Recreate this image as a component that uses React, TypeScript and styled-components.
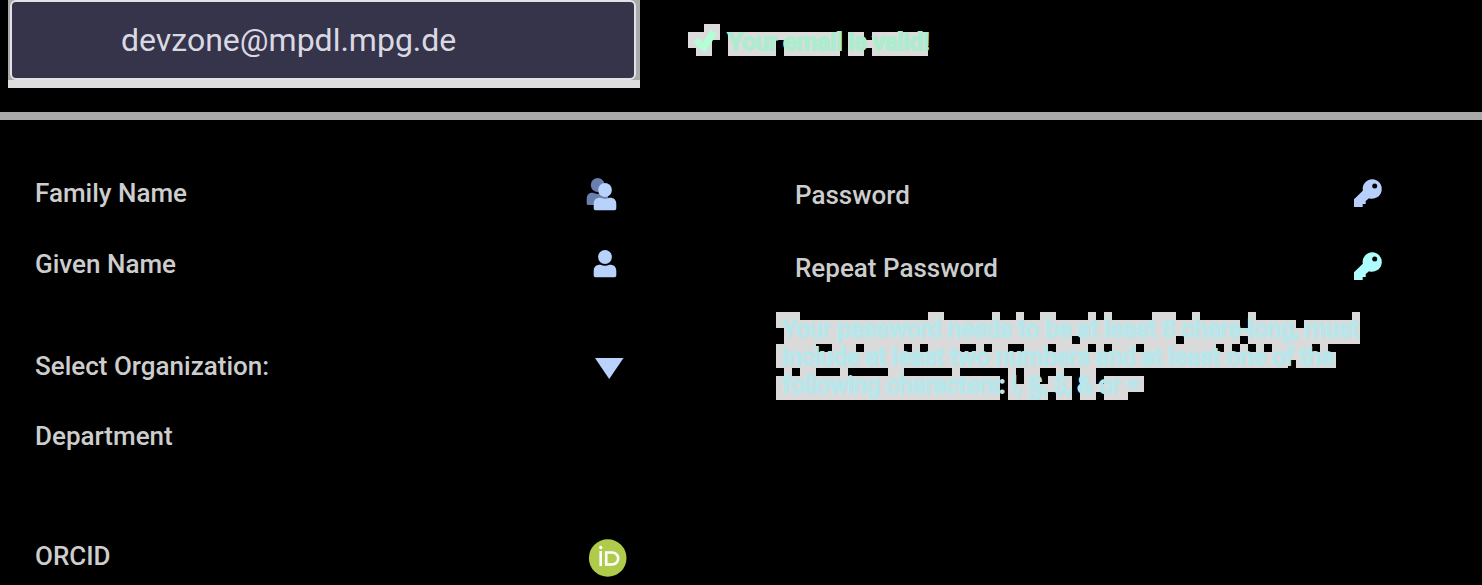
import React from "react";
import styled, { createGlobalStyle } from "styled-components";

const GlobalStyle = createGlobalStyle`
  * { box-sizing: border-box; }
  html { background: #000; }
  body { margin: 0; background: #000; color: #cdcdcd; font-family: Roboto, "Liberation Sans", sans-serif; }
`;

const Header = styled.header`
  display: flex;
  align-items: flex-start;
  gap: 48px;
  height: 120px;
  padding-left: 8px;
  border-bottom: 8px solid #a9a9a9;
`;

const EmailFrame = styled.div`
  flex: 0 0 calc(50% - 105px);
  padding: 0 4px 0 2px;
  background: #a9a9a9;
  border-bottom: 8px solid #dddcdf;
`;

const EmailInput = styled.input`
  display: block;
  width: 100%;
  height: 80px;
  padding: 0 109px;
  border: 2px solid #e2e2e6;
  border-radius: 6px;
  background: #35344a;
  color: #dad9e3;
  font: 400 32px/40px Roboto, "Liberation Sans", sans-serif;
  outline: none;
`;

const Pixelated = styled.div`
  position: relative;
  isolation: isolate;
`;

const Backdrop = styled.svg`
  position: absolute;
  top: 0;
  left: 0;
  z-index: -1;
`;

const ValidMessage = styled(Pixelated)`
  display: flex;
  align-items: center;
  gap: 8px;
  height: 36px;
  margin-top: 24px;
  color: #aeeccf;
  -webkit-text-stroke: 2px #aeeccf;
  font-size: 24px;
  line-height: 36px;
  font-weight: 500;
  white-space: nowrap;
`;

const Form = styled.form`
  display: grid;
  grid-template-columns: 1fr 1fr;
  gap: 164px;
  padding: 53px 99px 8px 35px;
`;

const Column = styled.div<{ $inset?: boolean }>`
  display: flex;
  flex-direction: column;
  min-width: 0;
  padding-top: ${(p) => (p.$inset ? 2 : 0)}px;
`;

const Row = styled.label<{ $after?: number; $indent?: number }>`
  display: flex;
  align-items: center;
  height: 40px;
  padding-left: ${(p) => p.$indent ?? 0}px;
  margin-bottom: ${(p) => p.$after ?? 0}px;
`;

const Field = styled.input`
  flex: 1;
  min-width: 0;
  height: 40px;
  padding: 0;
  border: 0;
  background: transparent;
  color: #cdcdcd;
  font: 500 26px/40px Roboto, "Liberation Sans", sans-serif;
  outline: none;
  &::placeholder { color: #cdcdcd; opacity: 1; }
`;

const Dropdown = styled.select`
  flex: 1;
  min-width: 0;
  height: 40px;
  padding: 0;
  border: 0;
  appearance: none;
  background: transparent;
  color: #cdcdcd;
  font: 500 26px/40px Roboto, "Liberation Sans", sans-serif;
  outline: none;
`;

const Icon = styled.svg.attrs({ width: 40, height: 40, viewBox: "0 0 40 40", "aria-hidden": true })`
  flex: 0 0 40px;
  overflow: visible;
`;

const Note = styled(Pixelated)`
  margin: 0 0 0 -15px;
  padding: 3px 0 0 6px;
  color: #b7e7eb;
  -webkit-text-stroke: 2px #b7e7eb;
  font-size: 24px;
  line-height: 28px;
  white-space: nowrap;
`;

type Run = [number, number];

const CELL = 8;

const VALID_RUNS: Run[][] = [
  [[2, 3]],
  [[0, 3], [5, 18], [20, 21], [23, 29]],
  [[0, 2], [5, 10], [12, 18], [20, 29]],
  [[1, 2], [5, 10], [12, 18], [20, 21], [23, 29]],
];

const NOTE_RUNS: Run[][] = [
  [[0, 2], [19, 20], [27, 27], [30, 30], [33, 34], [39, 39], [41, 41], [47, 49], [52, 52], [59, 59], [72, 72]],
  [[0, 57], [59, 64], [66, 72]],
  [[1, 72]],
  [[1, 36], [38, 49], [51, 57], [59, 72]],
  [[0, 4], [7, 9], [11, 15], [17, 17], [19, 22], [25, 25], [27, 28], [31, 33], [35, 38], [40, 40], [42, 44], [46, 54], [56, 56], [58, 58], [60, 60], [62, 66], [68, 68]],
  [[0, 69]],
  [[0, 63], [65, 69]],
  [[1, 1], [3, 4], [8, 8], [14, 15], [22, 22], [29, 29], [31, 32], [35, 35], [38, 39]],
  [[0, 27], [29, 29], [31, 32], [34, 36], [38, 39], [41, 45]],
  [[0, 27], [29, 36], [38, 45]],
  [[0, 27], [29, 33], [35, 36], [38, 39], [41, 43]],
];

function PixelBackdrop({ rows, color }: { rows: Run[][]; color: string }) {
  const cols = Math.max(...rows.flat().map(([, end]) => end + 1));
  const d = rows
    .flatMap((runs, y) =>
      runs.map(([a, b]) => `M${a * CELL} ${y * CELL}H${(b + 1) * CELL}v${CELL}H${a * CELL}z`)
    )
    .join("");
  return (
    <Backdrop width={cols * CELL} height={rows.length * CELL} shapeRendering="crispEdges" aria-hidden="true">
      <path d={d} fill={color} />
    </Backdrop>
  );
}

const CheckIcon = () => (
  <svg width="32" height="32" viewBox="0 0 32 32" aria-hidden="true">
    <path d="M8 14l8 7.500L26 6" fill="none" stroke="#b3ffd5" strokeWidth="7" />
  </svg>
);

const Person = ({ y }: { y: number }) => (
  <g fill="#b9d2fc" transform={`translate(0 ${y})`}>
    <circle cx="18" cy="7" r="6.900" />
    <path d="M6.700 25.500v-4.500c0-4.500 2.800-6.500 6.800-6.300q4.500 2.200 9 0c4-.2 6.800 1.800 6.800 6.300v4.500q0 1.800-1.800 1.800h-19q-1.800 0-1.800-1.800z" />
  </g>
);

const PersonIcon = () => (
  <Icon>
    <Person y={6} />
  </Icon>
);

const PeopleIcon = () => (
  <Icon>
    <g fill="#6a7fae">
      <circle cx="10.700" cy="12" r="6.900" />
      <path d="M-.3 30.500v-4.500c0-4.500 2.600-6.300 6.300-6.200q4.500 2.200 9 0c4 0 6.500 2 6.500 6.200v6h-20q-1.800 0-1.800-1.500z" />
    </g>
    <Person y={10} />
  </Icon>
);

const KeyIcon = ({ color }: { color: string }) => (
  <Icon>
    <path
      fill={color}
      fillRule="evenodd"
      d="M29.300 4.300a9.700 9.700 0 1 1-3.300 18.900l-1.500 1.300-1.800 1.500v3h-3v3H11v-7.800l8.800-8.500a9.700 9.700 0 0 1 9.500-11.400zm2.400 4.200a2.500 2.500 0 1 0 0 5a2.500 2.500 0 0 0 0-5z"
    />
  </Icon>
);

const ArrowIcon = () => (
  <Icon>
    <path d="M8 12h28.500L22.200 33z" fill="#bad3fd" />
  </Icon>
);

const OrcidIcon = () => (
  <Icon>
    <circle cx="20.700" cy="22" r="18.800" fill="#aecb4b" />
    <circle cx="13.700" cy="11.500" r="1.700" fill="#fff" />
    <path d="M13.700 15v15M19.200 16.500h6a6 6 0 0 1 0 12h-6z" fill="none" stroke="#fff" strokeWidth="2.600" />
  </Icon>
);

export default function App() {
  return (
    <>
      <GlobalStyle />
      <Header>
        <EmailFrame>
          <EmailInput type="email" aria-label="Email" defaultValue="devzone@mpdl.mpg.de" />
        </EmailFrame>
        <ValidMessage role="status">
          <PixelBackdrop rows={VALID_RUNS} color="#dcdcdc" />
          <CheckIcon />
          <span>Your email is valid!</span>
        </ValidMessage>
      </Header>
      <Form>
        <Column>
          <Row $after={31}>
            <Field aria-label="Family Name" placeholder="Family Name" />
            <PeopleIcon />
          </Row>
          <Row $after={62}>
            <Field aria-label="Given Name" placeholder="Given Name" />
            <PersonIcon />
          </Row>
          <Row $after={30}>
            <Dropdown aria-label="Select Organization" defaultValue="">
              <option value="">Select Organization:</option>
            </Dropdown>
            <ArrowIcon />
          </Row>
          <Row $after={80}>
            <Field aria-label="Department" placeholder="Department" />
          </Row>
          <Row>
            <Field aria-label="ORCID" placeholder="ORCID" />
            <OrcidIcon />
          </Row>
        </Column>
        <Column $inset>
          <Row $after={33} $indent={4}>
            <Field type="password" aria-label="Password" placeholder="Password" />
            <KeyIcon color="#b9cffb" />
          </Row>
          <Row $after={24} $indent={4}>
            <Field type="password" aria-label="Repeat Password" placeholder="Repeat Password" />
            <KeyIcon color="#aefcfd" />
          </Row>
          <Note>
            <PixelBackdrop rows={NOTE_RUNS} color="#dadada" />
            Your password needs to be at least 8 chars-long, must
            <br />
            include at least two numbers and at least one of the
            <br />
            following characters: !, §, $, &amp; or =
          </Note>
        </Column>
      </Form>
    </>
  );
}
